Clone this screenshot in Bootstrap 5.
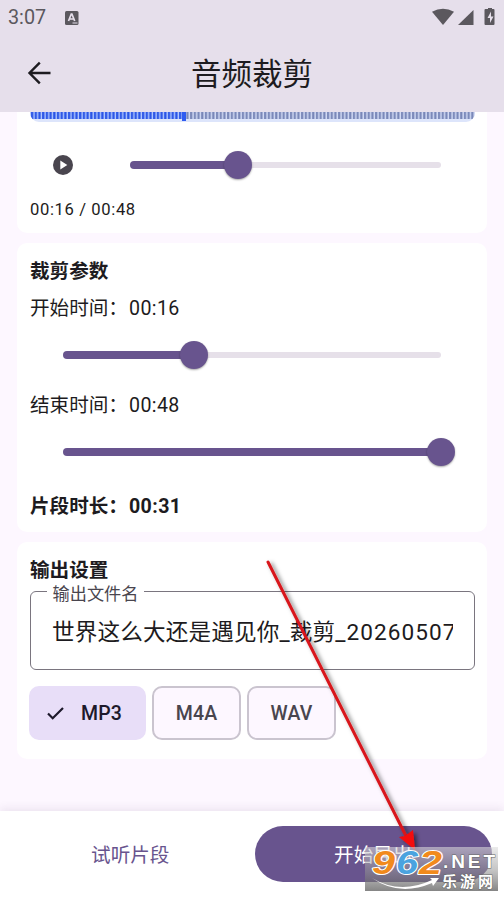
<!DOCTYPE html>
<html lang="zh-CN">
<head>
<meta charset="utf-8">
<meta name="viewport" content="width=device-width, initial-scale=1">
<title>音频裁剪</title>
<link href="https://cdn.jsdelivr.net/npm/bootstrap@5.3.0/dist/css/bootstrap.min.css" rel="stylesheet">
<style>
body{background:#fdf7ff;color:#1d1b20;font-family:Roboto,"Noto Sans CJK SC",sans-serif;height:897px;overflow:hidden;line-height:1}
.app-head{background:#e6dfeb;height:112px}
.status{height:34px;color:#5b585e;font-size:19.8px;padding:2px 8px 0}
.status-note{margin-left:19px}
.title-row{height:78px}
.title-row h1{font-size:30.5px;line-height:40px;font-weight:400;padding-top:3px}
.back{width:54px;padding-left:27px}
.panel{background:#fff;border:0;border-radius:10px;margin:0 17px 10px;padding:0 13px}
.p-play{height:121px;border-top-left-radius:0;border-top-right-radius:0}
.p-trim{height:289px;padding-top:15px}
.p-out{height:217px;padding-top:15px}
.wave{height:10px;background:#dde5fb;border-radius:0 0 9px 9px;overflow:hidden;margin-right:-1px}
.play-row{height:28px;margin-top:29px}
.play-row svg{margin-left:23px;margin-right:57px}
.track{height:28px;flex:1 1 auto;margin-right:33px}
.track .rail{height:6px;background:#e6e0e9;border-radius:3px}
.track .fill{height:8px;background:#68548e;border-radius:4px 0 0 4px}
.thumb{width:28px;height:28px;background:#68548e;border-radius:50%;box-shadow:0 1px 2px rgba(0,0,0,.35);margin-left:-14px;margin-right:-14px;z-index:1}
.wide{margin-left:33px;flex:none}
.time{font-size:16.6px;letter-spacing:.62px;line-height:20px;margin-top:21px}
.t{font-size:19.6px;line-height:28px;white-space:nowrap}
.n{letter-spacing:.4px;margin-left:1px}
.g-start{margin-top:9px}
.g-a{margin-top:18px}
.g-end{margin-top:23px}
.g-b{margin-top:18px}
.g-len{margin-top:27px}
.field{height:79px;margin:6px -1px 0 -.5px;position:relative}
.field fieldset{height:79px;border:1.5px solid #7a757f;border-radius:6px;padding:0 21.5px}
.tag{position:absolute;left:17px;top:-9px;background:#fff;padding:0 6px;font-size:17.2px;line-height:24px;color:#49454e}
.val{font-size:22.6px;line-height:32px;padding-top:25px;letter-spacing:.15px;white-space:nowrap;overflow:hidden}
.val span{letter-spacing:1.05px}
.chips{margin:16px 0 0 -1px;gap:6px}
.chip{height:54px;width:89px;border:2px solid #cac4cf;border-radius:10px;background:#fdf7ff;color:#49454e;font-size:19.5px;font-weight:500;letter-spacing:.2px;padding:2px 0 0}
.chip.on{width:117px;background:#e8def8;border-color:#e8def8;color:#1d192b;padding-right:6px}
.chip.on svg{margin-right:17px}
.foot{height:86px;background:#fff;box-shadow:0 -2px 9px rgba(70,40,90,.10);left:0;right:0;bottom:0;position:absolute;padding:15px 12px;gap:6px}
.foot .btn{width:237px;height:56px;border-radius:28px;font-size:19.6px;padding:4px 0 0;color:#68548e;border:0}
.foot .btn.go{width:238px;background:#68548e;color:#fff}
.over{position:absolute;left:0;top:0;pointer-events:none}
</style>
</head>
<body class="position-relative">
<header class="app-head">
  <div class="status d-flex align-items-center">
    <span>3:07</span>
    <svg class="status-note" width="14" height="16" viewBox="0 0 14 16"><rect y="1" width="13.500" height="14" rx="1.500" fill="#5b585e"/><path d="M3.500 11 6.300 4h.6l2.800 7M4.600 9h4" fill="none" stroke="#e6dfeb" stroke-width="1.700"/><path d="M7.500 13h5" stroke="#e6dfeb"/></svg>
    <svg class="ms-auto" width="65" height="20" viewBox="-1 0 65 20" fill="#5b585e"><path d="M0 3.700Q11-2.300 22 3.700L11 17z"/><path d="M41.500 2V17H26z"/><path d="M54.500 1H56V-.500h4V1h1.500q1 0 1 1v14q0 1-1 1h-8q-1 0-1-1V2q0-1 1-1z"/><path d="M59 3.500 55.500 10h2.500V15l3.500-6.500H59z" fill="#e6dfeb"/></svg>
  </div>
  <div class="title-row d-flex align-items-center">
    <div class="back"><svg width="24" height="24" viewBox="0 0 24 24" fill="none" stroke="#1d1b20" stroke-width="2.400"><path d="M23.500 12H3M12.800 1.700 2.500 12l10.300 10.300"/></svg></div>
    <h1 class="m-0 flex-fill text-center">音频裁剪</h1>
    <div class="back"></div>
  </div>
</header>
<main>
  <section class="panel card p-play">
    <div class="wave"><svg class="d-block" width="445" height="10"><defs><pattern id="b" width="3.700" height="10" patternUnits="userSpaceOnUse"><path fill="#b4cbff" d="M0 0h4v7H0z"/><path fill="#2b55e6" d="M1 0h2.300v7H1z"/></pattern><pattern id="g" width="3.700" height="10" patternUnits="userSpaceOnUse"><path fill="#d3dcf5" d="M0 0h4v7H0z"/><path fill="#7987b8" d="M1 0h2.200v7H1z"/></pattern></defs><path fill="url(#b)" d="M0 0h153v7H0z"/><path fill="url(#g)" d="M155 0h290v7H155z"/><path fill="#2f5cf0" d="M152 0h4v9h-4z"/></svg></div>
    <div class="play-row d-flex align-items-center">
      <svg width="20" height="20" viewBox="0 0 20 20"><circle cx="10" cy="10" r="10" fill="#49454e"/><path d="M7.300 5.500v9l7-4.500z" fill="#fff"/></svg>
      <div class="track d-flex align-items-center"><div class="fill" style="width:107.5px"></div><div class="thumb"></div><div class="rail flex-fill"></div></div>
    </div>
    <div class="time">00:16 / 00:48</div>
  </section>
  <section class="panel card p-trim">
    <div class="t fw-bold">裁剪参数</div>
    <div class="t g-start">开始时间：<span class="n">00:16</span></div>
    <div class="track wide g-a d-flex align-items-center"><div class="fill" style="width:130.5px"></div><div class="thumb"></div><div class="rail flex-fill"></div></div>
    <div class="t g-end">结束时间：<span class="n">00:48</span></div>
    <div class="track wide g-b d-flex align-items-center"><div class="fill" style="width:378px"></div><div class="thumb flex-shrink-0"></div></div>
    <div class="t fw-bold g-len">片段时长：<span class="n">00:31</span></div>
  </section>
  <section class="panel card p-out">
    <div class="t fw-bold">输出设置</div>
    <div class="field"><fieldset><div class="val">世界这么大还是遇见你_裁剪<span>_20260507</span></div></fieldset><span class="tag">输出文件名</span></div>
    <div class="chips d-flex">
      <button class="btn chip on d-flex align-items-center justify-content-center"><svg width="17" height="14" viewBox="0 0 17 14" fill="none" stroke="#1d192b" stroke-width="2.200"><path d="m1 6.500 4.700 4.700L16 1"/></svg>MP3</button>
      <button class="btn chip">M4A</button>
      <button class="btn chip">WAV</button>
    </div>
  </section>
</main>
<footer class="foot d-flex">
  <button class="btn">试听片段</button>
  <button class="btn go">开始导出</button>
</footer>
<svg class="over" width="504" height="897" viewBox="0 0 504 897">
  <defs>
    <linearGradient id="wm" x1="0" y1="0" x2="0" y2="1"><stop offset="0" stop-color="#ddd" stop-opacity=".58"/><stop offset=".5" stop-color="#999" stop-opacity=".55"/><stop offset="1" stop-color="#555" stop-opacity=".72"/></linearGradient>
    <filter id="sh" x="-20%" y="-20%" width="150%" height="150%"><feDropShadow dx="3" dy="2" stdDeviation="2" flood-opacity=".5"/></filter>
  </defs>
  <g filter="url(#sh)"><path d="M268 562 406 836" stroke="#d8151b" stroke-width="3" stroke-linecap="round"/><path d="m399 837 6-1 8-6 2 20z" fill="#f30b0b"/></g>
  <rect x="365" y="847" width="133" height="44" fill="url(#wm)"/>
  <g font-family="Liberation Sans,sans-serif" font-weight="700" font-style="italic" font-size="33" stroke="#fff" stroke-width="2" paint-order="stroke" stroke-linejoin="round">
    <text x="372" y="874" fill="#f18a1c" textLength="23" lengthAdjust="spacingAndGlyphs">9</text>
    <text x="396" y="874" fill="#4ba3df" textLength="22" lengthAdjust="spacingAndGlyphs">6</text>
    <text x="419" y="874" fill="#f18a1c" textLength="23" lengthAdjust="spacingAndGlyphs">2</text>
  </g>
  <g fill="#fff" stroke="#666" stroke-width="1" paint-order="stroke" font-weight="700">
    <text x="443" y="868" font-family="Liberation Sans,sans-serif" font-size="19" textLength="52" lengthAdjust="spacing">.NET</text>
    <text x="442" y="887" font-family="Noto Sans CJK SC,sans-serif" font-size="15" textLength="51">乐游网</text>
    <path d="M372 878q28 17 60 2l-2-2 9 0-6 8-1-3q-33 14-60-5z" stroke="none"/>
  </g>
</svg>
<script src="https://cdn.jsdelivr.net/npm/bootstrap@5.3.0/dist/js/bootstrap.bundle.min.js"></script>
</body>
</html>
